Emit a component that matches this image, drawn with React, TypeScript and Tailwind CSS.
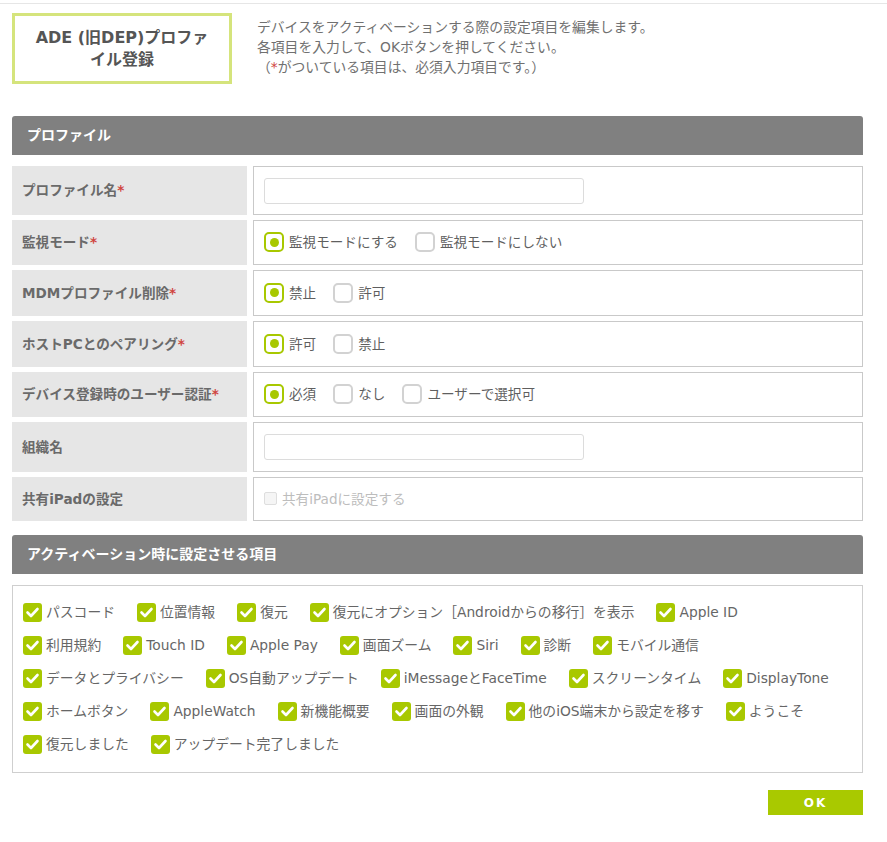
import React from "react";

const FONT = { fontFamily: '"DejaVu Sans", "Noto Sans CJK JP", sans-serif' };

function Req() {
  return <span className="text-[#d0453f]">*</span>;
}

function Radio({ checked, label }: { checked?: boolean; label: string }) {
  return (
    <span className="flex items-center gap-[5px]">
      <span
        className={
          "flex h-[20px] w-[20px] items-center justify-center rounded-[5px] border-2 " +
          (checked ? "border-[#a8c800]" : "border-[#d2d2d2]")
        }
      >
        {checked && <span className="h-[9px] w-[9px] rounded-full bg-[#a8c800]" />}
      </span>
      <span className="text-[#5f5f5f]">{label}</span>
    </span>
  );
}

function Check({ label }: { label: string }) {
  return (
    <span className="flex items-center gap-[4px]">
      <span className="flex h-[19px] w-[19px] items-center justify-center rounded-[3px] bg-[#a8c800]">
        <svg width="15" height="15" viewBox="0 0 15 15">
          <polyline
            points="2.5,7.5 6,11 12.5,4"
            fill="none"
            stroke="#fff"
            strokeWidth="2.6"
            strokeLinecap="round"
            strokeLinejoin="round"
          />
        </svg>
      </span>
      <span className="whitespace-nowrap text-[#666]">{label}</span>
    </span>
  );
}

function Row({
  label,
  req,
  h,
  children,
}: {
  label: string;
  req?: boolean;
  h: string;
  children: React.ReactNode;
}) {
  return (
    <div className={"flex gap-[6px] " + h}>
      <div className="flex w-[235px] items-center bg-[#e6e6e6] pl-[10px] font-bold text-[#6a6a6a]">
        {label}
        {req && <Req />}
      </div>
      <div className="flex flex-1 items-center gap-[17px] border border-[#c9c9c9] pl-[10px]">
        {children}
      </div>
    </div>
  );
}

function Input() {
  return <div className="h-[26px] w-[320px] rounded-[3px] border border-[#dcdcdc] bg-white" />;
}

function SectionHeader({ title }: { title: string }) {
  return (
    <div className="flex h-[39px] items-center rounded-t-[3px] bg-[#808080] pl-[15px] text-[14px] font-bold text-white">
      {title}
    </div>
  );
}

const checkRows: string[][] = [
  ["パスコード", "位置情報", "復元", "復元にオプション［Androidからの移行］を表示", "Apple ID"],
  ["利用規約", "Touch ID", "Apple Pay", "画面ズーム", "Siri", "診断", "モバイル通信"],
  ["データとプライバシー", "OS自動アップデート", "iMessageとFaceTime", "スクリーンタイム", "DisplayTone"],
  ["ホームボタン", "AppleWatch", "新機能概要", "画面の外観", "他のiOS端末から設定を移す", "ようこそ"],
  ["復元しました", "アップデート完了しました"],
];

export default function App() {
  return (
    <div className="h-[842px] w-[887px] overflow-hidden bg-white text-[13.6px]" style={FONT}>
      <div className="mt-[3px] border-t border-[#e6e6e6]" />
      <div className="flex pl-[12px] pt-[9px]">
        <div className="flex h-[71px] w-[220px] items-center justify-center border-[3px] border-[#d5e47c] text-center text-[16px] font-bold leading-[22px] text-[#555]">
          <div>
            ADE (旧DEP)プロファ
            <br />
            イル登録
          </div>
        </div>
        <div className="ml-[25px] mt-[4px] text-[13.8px] leading-[20px] text-[#707070]">
          <div>デバイスをアクティベーションする際の設定項目を編集します。</div>
          <div>各項目を入力して、OKボタンを押してください。</div>
          <div>
            （<Req />がついている項目は、必須入力項目です。）
          </div>
        </div>
      </div>

      <div className="ml-[12px] mr-[24px] mt-[32px]">
        <SectionHeader title="プロファイル" />
        <div className="mt-[11px] flex flex-col gap-[5px]">
          <Row label="プロファイル名" req h="h-[49px]">
            <Input />
          </Row>
          <Row label="監視モード" req h="h-[45px]">
            <Radio checked label="監視モードにする" />
            <Radio label="監視モードにしない" />
          </Row>
          <Row label="MDMプロファイル削除" req h="h-[46px]">
            <Radio checked label="禁止" />
            <Radio label="許可" />
          </Row>
          <Row label="ホストPCとのペアリング" req h="h-[46px]">
            <Radio checked label="許可" />
            <Radio label="禁止" />
          </Row>
          <Row label="デバイス登録時のユーザー認証" req h="h-[45px]">
            <Radio checked label="必須" />
            <Radio label="なし" />
            <Radio label="ユーザーで選択可" />
          </Row>
          <Row label="組織名" h="h-[50px]">
            <Input />
          </Row>
          <Row label="共有iPadの設定" h="h-[44px]">
            <span className="flex items-center gap-[5px]">
              <span className="h-[13px] w-[13px] rounded-[2px] border border-[#dedede] bg-[#f5f5f5]" />
              <span className="text-[#bdbdbd]">共有iPadに設定する</span>
            </span>
          </Row>
        </div>

        <div className="mt-[14px]">
          <SectionHeader title="アクティベーション時に設定させる項目" />
        </div>
        <div className="mt-[11px] flex h-[188px] flex-col gap-[14px] border border-[#cfcfcf] pl-[10px] pt-[17px] text-[13.8px]">
          {checkRows.map((row, i) => (
            <div key={i} className="flex h-[19px] items-center gap-[22px]">
              {row.map((l) => (
                <Check key={l} label={l} />
              ))}
            </div>
          ))}
        </div>

        <div className="mt-[17px] flex justify-end">
          <button className="flex h-[25px] w-[95px] items-center justify-center bg-[#a9c900] text-[12px] font-bold tracking-[2px] text-white">
            OK
          </button>
        </div>
      </div>
    </div>
  );
}
